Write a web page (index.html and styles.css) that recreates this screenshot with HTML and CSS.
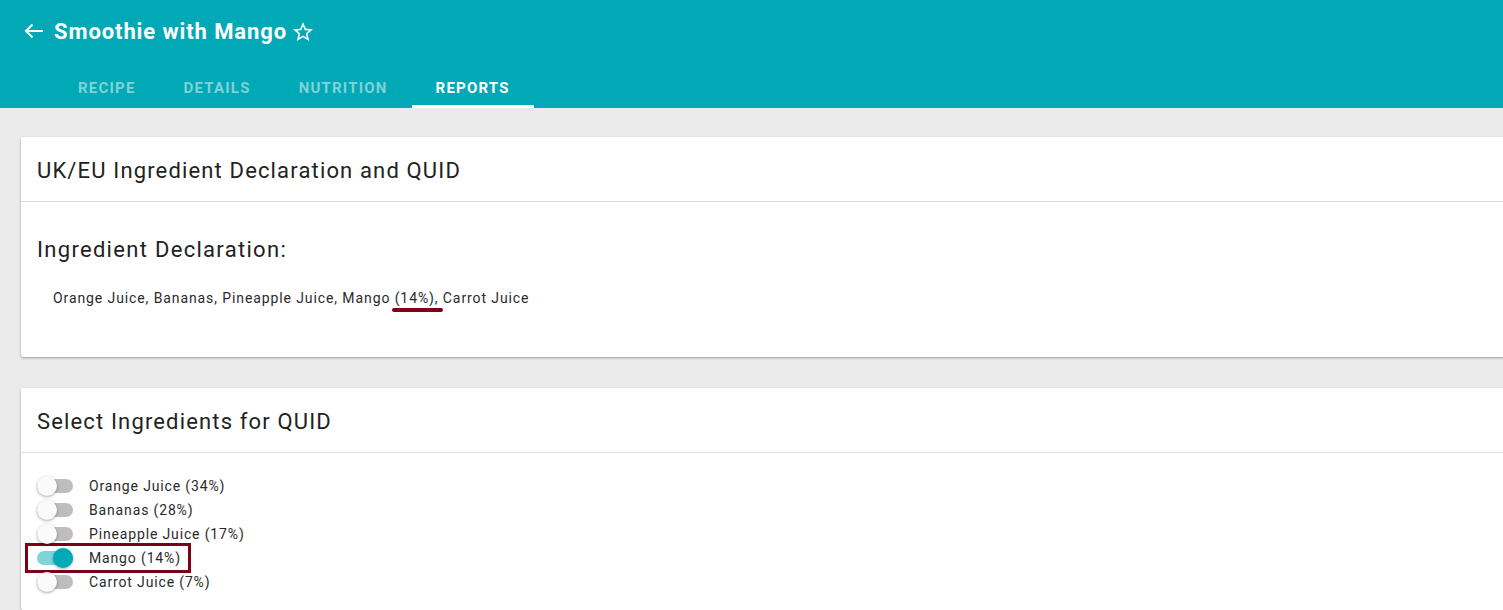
FILE: index.html
```html
<!DOCTYPE html>
<html lang="en">
<head>
<meta charset="utf-8">
<title>Smoothie with Mango</title>
<link rel="stylesheet" href="styles.css">
</head>
<body>
<header class="appbar">
  <div class="titlebar">
    <svg class="back" width="20" height="16" viewBox="0 0 20 16" aria-hidden="true">
      <path d="M2 8H19M8.5 1.5L2 8L8.5 14.5" fill="none" stroke="#fff" stroke-width="2"/>
    </svg>
    <h1 class="title">Smoothie with Mango</h1>
    <svg class="star" width="24" height="24" viewBox="0 0 24 24" aria-hidden="true">
      <path fill="#fff" d="M22 9.24l-7.19-.62L12 2 9.19 8.630 2 9.24l5.46 4.73L5.82 21 12 17.27 18.18 21l-1.63-7.03L22 9.24zM12 15.4l-3.76 2.27 1-4.28-3.32-2.88 4.38-.38L12 6.1l1.71 4.04 4.38.38-3.32 2.88 1 4.28L12 15.4z"/>
    </svg>
  </div>
  <nav class="tabs">
    <a class="tab">RECIPE</a>
    <a class="tab">DETAILS</a>
    <a class="tab">NUTRITION</a>
    <a class="tab active">REPORTS</a>
  </nav>
</header>

<main class="content">
  <section class="card card-decl">
    <div class="card-header">UK/EU Ingredient Declaration and QUID</div>
    <div class="card-body decl-body">
      <h2 class="subhead">Ingredient Declaration:</h2>
      <p class="decl">Orange Juice, Bananas, Pineapple Juice, Mango <span class="mark">(14%),</span> Carrot Juice</p>
    </div>
  </section>

  <section class="card card-quid">
    <div class="card-header">Select Ingredients for QUID</div>
    <div class="card-body quid-body">
      <div class="row"><span class="toggle"><span class="thumb"></span></span><span class="label">Orange Juice (34%)</span></div>
      <div class="row"><span class="toggle"><span class="thumb"></span></span><span class="label">Bananas (28%)</span></div>
      <div class="row"><span class="toggle"><span class="thumb"></span></span><span class="label">Pineapple Juice (17%)</span></div>
      <div class="row highlight"><span class="toggle on"><span class="thumb"></span></span><span class="label">Mango (14%)</span></div>
      <div class="row"><span class="toggle"><span class="thumb"></span></span><span class="label">Carrot Juice (7%)</span></div>
    </div>
  </section>
</main>
</body>
</html>
```

FILE: styles.css
```css
* { box-sizing: border-box; }

html, body {
  margin: 0;
  padding: 0;
}

body {
  background: #ebebeb;
  font-family: Roboto, "Liberation Sans", sans-serif;
  color: #222;
  overflow: hidden;
  width: 1503px;
  height: 610px;
}

.appbar {
  background: #00a9b5;
  height: 108px;
  display: flex;
  flex-direction: column;
}

.titlebar {
  height: 62px;
  display: flex;
  align-items: center;
  padding-left: 24px;
}

.back {
  display: block;
  margin-right: 10px;
}

.title {
  margin: 0;
  font-size: 22px;
  font-weight: 700;
  color: #fff;
  letter-spacing: 0.9px;
}

.star {
  display: block;
  margin-left: 4px;
  margin-top: 1px;
}

.tabs {
  display: flex;
  height: 46px;
  padding-left: 54px;
}

.tab {
  display: flex;
  align-items: center;
  padding: 8px 24px 0;
  font-size: 15px;
  font-weight: 700;
  color: #80d2d8;
  letter-spacing: 1.2px;
  border-bottom: 3px solid transparent;
}

.tab.active {
  color: #fff;
  border-bottom-color: #fff;
}

.content {
  padding-left: 21px;
  padding-top: 29px;
  display: flex;
  flex-direction: column;
  gap: 31px;
}

.card {
  background: #fff;
  width: 1500px;
  box-shadow: 0 1px 3px rgba(0,0,0,0.25), 0 1px 1px rgba(0,0,0,0.12);
  border-radius: 2px 0 0 2px;
}

.card-header {
  height: 65px;
  border-bottom: 1px solid #dedede;
  display: flex;
  align-items: center;
  padding-left: 16px;
  padding-top: 2px;
  font-size: 22px;
  color: #222;
  letter-spacing: 1.15px;
}

.decl-body {
  padding: 34px 16px 49px;
}

.subhead {
  margin: 0;
  font-size: 22px;
  line-height: 28px;
  font-weight: 400;
  letter-spacing: 1.3px;
  color: #222;
}

.decl {
  margin: 24px 0 0;
  padding-left: 16px;
  font-size: 14px;
  line-height: 20px;
  color: #2a2a2a;
  letter-spacing: 0.9px;
}

.mark {
  position: relative;
}

.mark::after {
  content: "";
  position: absolute;
  left: -3px;
  right: -5px;
  bottom: -6px;
  height: 4px;
  border-radius: 2px;
  background: #7d0018;
}

.quid-body {
  padding: 21px 16px 16px;
}

.row {
  height: 24px;
  display: flex;
  align-items: center;
  width: fit-content;
}

.toggle {
  position: relative;
  width: 36px;
  height: 14px;
  border-radius: 7px;
  background: #bdbdbd;
  margin-right: 16px;
}

.thumb {
  position: absolute;
  top: -3px;
  left: 0;
  width: 20px;
  height: 20px;
  border-radius: 50%;
  background: #fafafa;
  box-shadow: 0 1px 3px rgba(0,0,0,0.35);
}

.toggle.on {
  background: #7fd4da;
}

.toggle.on .thumb {
  left: 16px;
  background: #00a9b5;
}

.label {
  font-size: 14px;
  color: #2a2a2a;
  letter-spacing: 0.85px;
}

.highlight {
  outline: 3px solid #7d0018;
  outline-offset: 0;
  margin-left: -9px;
  padding-left: 9px;
  padding-right: 7px;
}
```
